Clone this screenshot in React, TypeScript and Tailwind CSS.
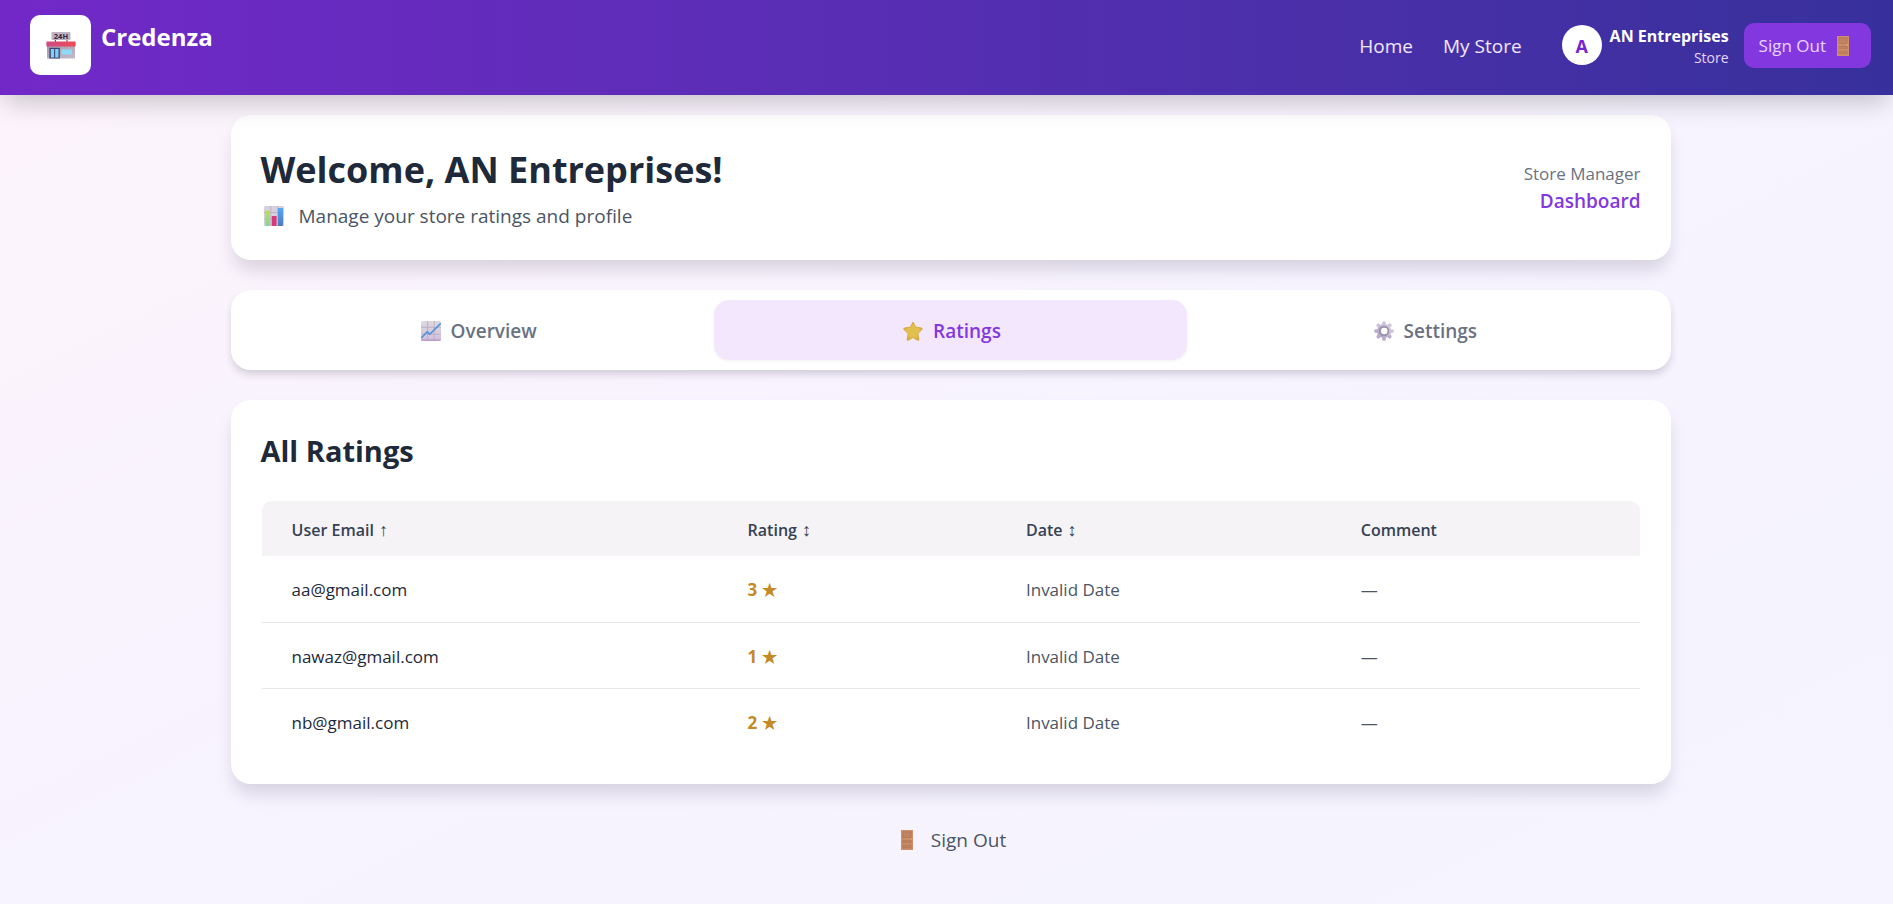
import { useState } from 'react';

type IconProps = { className?: string };

function StoreIcon({ className }: IconProps) {
  return (
    <svg viewBox="0 0 30 30" className={className} aria-hidden="true">
      <defs>
        <linearGradient id="roof" x1="0" x2="1">
          <stop offset="0" stopColor="#cf4a86" />
          <stop offset="1" stopColor="#ee4c52" />
        </linearGradient>
        <linearGradient id="wall" x1="0" y1="0" x2="1" y2="1">
          <stop offset="0" stopColor="#a79bab" />
          <stop offset="1" stopColor="#c4bac8" />
        </linearGradient>
      </defs>
      <path d="M9.4 8v4M21 8v4" stroke="#4a3d52" strokeWidth="1" />
      <rect x="5.5" y="2" width="19" height="8" rx="0.8" fill="#bdb4c1" />
      <text x="15" y="8.6" textAnchor="middle" fontSize="7.5" fontWeight="700" fill="#35264a">24H</text>
      <rect x="1" y="15" width="28" height="13.5" fill="url(#wall)" />
      <rect x="0.4" y="11.6" width="29.2" height="5" rx="0.6" fill="url(#roof)" />
      <rect x="3.4" y="17.8" width="10.4" height="10.7" fill="#3d4270" />
      <rect x="4.8" y="19" width="3.3" height="8.6" fill="#7fd0f8" />
      <rect x="9.2" y="19" width="3.3" height="8.6" fill="#7fd0f8" />
      <rect x="15.6" y="19.6" width="10.4" height="5" rx="0.4" fill="#8adcf8" />
    </svg>
  );
}

function DoorIcon({ className }: IconProps) {
  return (
    <svg viewBox="0 0 20 20" className={className} aria-hidden="true">
      <rect x="4" y="0" width="12" height="20" rx="0.8" fill="#c68a67" />
      <rect x="4.6" y="0.6" width="10.8" height="18.8" fill="none" stroke="#cf9068" strokeWidth="1" />
      <path d="M6 1.8h8v5.8H6zM6 10.6h8v2H6zM6 15h8v2.6H6z" fill="#c08462" stroke="#b07353" strokeWidth="0.6" />
      <path d="M4.5 8.8h11M6 14h8" stroke="#d99a6c" strokeWidth="0.7" />
      <circle cx="14.6" cy="8.8" r="0.9" fill="#f0a23c" />
    </svg>
  );
}

function BarChartIcon({ className }: IconProps) {
  return (
    <svg viewBox="0 0 20 20" className={className} aria-hidden="true">
      <defs>
        <linearGradient id="barGreen" x1="0" y1="0" x2="0" y2="1">
          <stop offset="0" stopColor="#b9e05c" />
          <stop offset="1" stopColor="#86d39a" />
        </linearGradient>
        <linearGradient id="barBlue" x1="0" y1="0" x2="0" y2="1">
          <stop offset="0" stopColor="#58a8f0" />
          <stop offset="1" stopColor="#4b78c4" />
        </linearGradient>
      </defs>
      <rect width="20" height="20" rx="1.6" fill="#d8cfdf" />
      <path d="M0 6.5h20M0 13h20M6.8 0v20M13.4 0v20" stroke="#b9adc4" strokeWidth="0.8" />
      <path d="M1.2 4.4h4.6V20H2.4a1.2 1.2 0 0 1-1.2-1.2z" fill="url(#barGreen)" />
      <rect x="7.8" y="10" width="4.8" height="10" rx="0.4" fill="#d43a77" />
      <path d="M14 2h5v16.8a1.2 1.2 0 0 1-1.2 1.2H14z" fill="url(#barBlue)" />
    </svg>
  );
}

function LineChartIcon({ className }: IconProps) {
  return (
    <svg viewBox="0 0 20 20" className={className} aria-hidden="true">
      <defs>
        <linearGradient id="sheet" x1="0" y1="0" x2="0" y2="1">
          <stop offset="0" stopColor="#ded7df" />
          <stop offset="0.85" stopColor="#d3c4de" />
          <stop offset="1" stopColor="#b295c8" />
        </linearGradient>
      </defs>
      <rect width="20" height="20" rx="1.6" fill="url(#sheet)" />
      <path d="M0 6.3h20M0 13.3h20M6.6 0v20M13.2 0v20" stroke="#b6a8c0" strokeWidth="0.8" />
      <path d="M0.3 17L6.2 10.8 8.8 13.2 19.8 2.4" fill="none" stroke="#4b90da" strokeWidth="1.6" />
    </svg>
  );
}

function StarIcon({ className }: IconProps) {
  return (
    <svg viewBox="0 0 20 20" className={className} aria-hidden="true">
      <defs>
        <radialGradient id="gold">
          <stop offset="0" stopColor="#dfbf52" />
          <stop offset="0.6" stopColor="#e3c14d" />
          <stop offset="1" stopColor="#d9a83e" />
        </radialGradient>
      </defs>
      <path
        d="M10 1l2.6 5.1 5.9.9c.8.1 1 1 .5 1.5l-4.1 4.1 1 5.7c.1.9-.6 1.300-1.300.9L10 16.600l-4.600 2.600c-.7.4-1.400 0-1.300-.9l1-5.700L1 8.500C.5 8 .7 7.100 1.500 7l5.900-.9z"
        fill="url(#gold)"
        stroke="#d6a63c"
        strokeWidth="0.9"
        strokeLinejoin="round"
      />
    </svg>
  );
}

function GearIcon({ className }: IconProps) {
  const teeth = [0, 45, 90, 135, 180, 225, 270, 315];
  return (
    <svg viewBox="0 0 20 20" className={className} aria-hidden="true">
      <defs>
        <linearGradient id="metal" x1="1" y1="0" x2="0" y2="1">
          <stop offset="0" stopColor="#d6cfe2" />
          <stop offset="1" stopColor="#b3a0ca" />
        </linearGradient>
      </defs>
      {teeth.map((angle) => (
        <rect key={angle} x="8.2" y="0.2" width="3.6" height="6" rx="1.6" fill={angle > 100 && angle < 280 ? '#b9a9cf' : '#cdc4db'} transform={`rotate(${angle} 10 10)`} />
      ))}
      <circle cx="10" cy="10" r="7.2" fill="url(#metal)" />
      <circle cx="10" cy="10" r="4.2" fill="none" stroke="#9c90a8" strokeWidth="2" />
      <circle cx="10.3" cy="10" r="3.2" fill="#fff" />
    </svg>
  );
}

const tabs = [
  { name: 'Overview', Icon: LineChartIcon },
  { name: 'Ratings', Icon: StarIcon },
  { name: 'Settings', Icon: GearIcon },
];

const columns = [
  { label: 'User Email', arrow: '↑', width: 'w-[33.1%] px-[30px] pt-[2px] font-semibold' },
  { label: 'Rating', arrow: '↕', width: 'w-[20.2%] px-[30px] pt-[2px] font-semibold' },
  { label: 'Date', arrow: '↕', width: 'w-[24.3%] px-[30px] pt-[2px] font-semibold' },
  { label: 'Comment', arrow: '', width: 'px-[30px] pt-[2px] font-semibold' },
];

const ratings = [
  { email: 'aa@gmail.com', rating: 3 },
  { email: 'nawaz@gmail.com', rating: 1 },
  { email: 'nb@gmail.com', rating: 2 },
];

export default function App() {
  const [active, setActive] = useState('Ratings');

  return (
    <div className="min-h-screen bg-linear-to-br from-[#fdf4fb] via-[#f7f3ff] via-50% to-[#f5f4ff] font-['Open_Sans',sans-serif] text-gray-800">
      <header className="relative bg-linear-to-r from-[#7228c8] to-[#37309c] shadow-[0_12px_24px_-4px_rgba(0,0,0,0.2)]">
        <div className="flex h-[95px] items-center justify-between pr-[22px] pb-[5px] pl-[30px]">
          <a href="#home" className="flex items-start gap-[10px]">
            <span className="flex h-[60px] w-[61px] items-center justify-center rounded-[10px] bg-white">
              <StoreIcon className="size-[30px]" />
            </span>
            <span className="pt-1 text-2xl leading-[35px] font-bold text-white">Credenza</span>
          </a>
          <div className="flex items-center">
            <nav className="flex items-center gap-[30px] pt-[2px] text-[19px] text-purple-100">
              <a href="#home">Home</a>
              <a href="#store">My Store</a>
            </nav>
            <div className="ml-10 flex items-center gap-2">
              <span className="flex size-10 items-center justify-center rounded-full bg-white pt-[2px] text-lg font-bold text-[#7526cc]">A</span>
              <div className="flex flex-col items-end pt-[3px]">
                <span className="text-base leading-[22px] font-bold text-white">AN Entreprises</span>
                <span className="text-sm leading-[22px] text-purple-200">Store</span>
              </div>
            </div>
            <button type="button" className="ml-[15px] flex h-[45px] items-center gap-[7px] rounded-[10px] bg-[#8338df] pt-[2px] pr-[18px] pl-[15px] text-[17px] text-purple-200">
              Sign Out
              <DoorIcon className="size-5" />
            </button>
          </div>
        </div>
      </header>

      <main className="pt-5 pb-12 pl-2">
        <div className="mx-auto flex w-full max-w-[1440px] flex-col gap-[30px]">
          <section className="flex items-center justify-between rounded-[20px] bg-white px-[30px] pt-[31px] pb-[29px] shadow-[0_12px_18px_-3px_rgba(20,15,40,0.15)]">
            <div>
              <h1 className="text-4xl leading-[47px] font-bold">Welcome, AN Entreprises!</h1>
              <p className="mt-2 flex items-center gap-[15px] pl-[3px] text-[19px] leading-[30px] text-gray-600">
                <BarChartIcon className="size-5" />
                Manage your store ratings and profile
              </p>
            </div>
            <div className="text-right">
              <p className="text-[17px] leading-[25px] text-gray-500">Store Manager</p>
              <p className="text-[19px] leading-[30px] font-semibold text-[#8338df]">Dashboard</p>
            </div>
          </section>

          <div role="tablist" className="grid grid-cols-3 rounded-[20px] bg-white p-[10px] shadow-[0_5px_8px_-1px_rgba(30,20,40,0.18)]">
            {tabs.map(({ name, Icon }) => (
              <button
                key={name}
                type="button"
                role="tab"
                aria-selected={active === name}
                onClick={() => setActive(name)}
                className={
                  active === name
                    ? 'flex h-[60px] items-center justify-center gap-[10px] rounded-[15px] bg-[#f3e7fd] pt-[2px] pl-[3px] text-[19px] font-semibold text-[#8338df] shadow-[0_1px_3px_rgba(0,0,0,0.06)]'
                    : 'flex h-[60px] items-center justify-center gap-[10px] rounded-[15px] pt-[2px] pl-[3px] text-[19px] font-semibold text-gray-500'
                }
              >
                <Icon className="size-5" />
                {name}
              </button>
            ))}
          </div>

          <section className="rounded-[20px] bg-white px-[30px] pt-[31px] pb-[30px] shadow-[0_12px_18px_-3px_rgba(20,15,40,0.15)]">
            <h2 className="text-[29px] leading-10 font-bold">All Ratings</h2>
            <div className="mx-px mt-[30px] overflow-hidden rounded-t-[10px]">
              <table className="w-full table-fixed text-left text-[17px] leading-[25px]">
                <thead className="bg-[#f5f3f6] text-base text-gray-700">
                  <tr className="h-[55px]">
                    {columns.map((column) => (
                      <th key={column.label} scope="col" className={column.width}>
                        {column.label}
                        {column.arrow && <span className="font-['Liberation_Sans',sans-serif] text-lg leading-5 font-normal"> {column.arrow}</span>}
                      </th>
                    ))}
                  </tr>
                </thead>
                <tbody>
                  {ratings.map((row) => (
                    <tr key={row.email} className="h-[66px] border-b border-gray-200 last:border-b-0">
                      <td className="px-[30px] pt-[2px]">{row.email}</td>
                      <td className="px-[30px] pt-[2px] font-bold text-[#c38a27]">{row.rating} ★</td>
                      <td className="px-[30px] pt-[2px] text-gray-600">Invalid Date</td>
                      <td className="px-[30px] pt-[2px] text-gray-600">—</td>
                    </tr>
                  ))}
                </tbody>
              </table>
            </div>
          </section>

          <button type="button" className="flex items-center gap-[14px] self-center pl-[2px] text-[19px] leading-[52px] text-gray-600">
            <DoorIcon className="size-5" />
            Sign Out
          </button>
        </div>
      </main>
    </div>
  );
}
